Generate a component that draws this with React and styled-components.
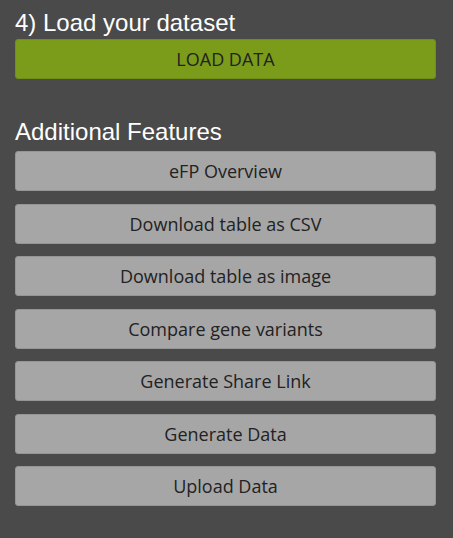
import styled, { createGlobalStyle } from "styled-components";

const features = [
  "eFP Overview",
  "Download table as CSV",
  "Download table as image",
  "Compare gene variants",
  "Generate Share Link",
  "Generate Data",
  "Upload Data",
];

export default function App() {
  return (
    <>
      <GlobalStyle />
      <Panel>
        <Section>
          <Heading $gap={3}>4) Load your dataset</Heading>
          <LoadButton type="button">LOAD DATA</LoadButton>
        </Section>
        <Section>
          <Heading $gap={6.5}>Additional Features</Heading>
          <ButtonList>
            {features.map((label) => (
              <FeatureButton key={label} type="button">
                {label}
              </FeatureButton>
            ))}
          </ButtonList>
        </Section>
      </Panel>
    </>
  );
}

const GlobalStyle = createGlobalStyle`
  html, body {
    margin: 0;
    background: #4a4a4a;
  }
`;

const Panel = styled.main`
  width: 453px;
  height: 538px;
  box-sizing: border-box;
  padding: 9px 17px 0 15px;
  background: #4a4a4a;
  display: flex;
  flex-direction: column;
  gap: 38.5px;
`;

const Section = styled.section`
  display: flex;
  flex-direction: column;
`;

const Heading = styled.h2`
  margin: 0 0 ${(p) => p.$gap}px;
  font-family: "Liberation Sans", Arial, sans-serif;
  font-weight: 400;
  font-size: 24px;
  line-height: 27px;
  color: #ffffff;
`;

const BaseButton = styled.button`
  width: 100%;
  height: 40px;
  padding: 0;
  box-sizing: border-box;
  border-radius: 3px;
  font-family: "Open Sans", "Noto Sans", sans-serif;
  font-size: 18px;
  color: #222222;
  text-align: center;
  cursor: pointer;
`;

const LoadButton = styled(BaseButton)`
  background: #7a9c1a;
  border: 1px solid #6f8f17;
`;

const ButtonList = styled.div`
  display: flex;
  flex-direction: column;
  gap: 12.5px;
`;

const FeatureButton = styled(BaseButton)`
  background: #a6a6a6;
  border: 1px solid #959595;
`;
